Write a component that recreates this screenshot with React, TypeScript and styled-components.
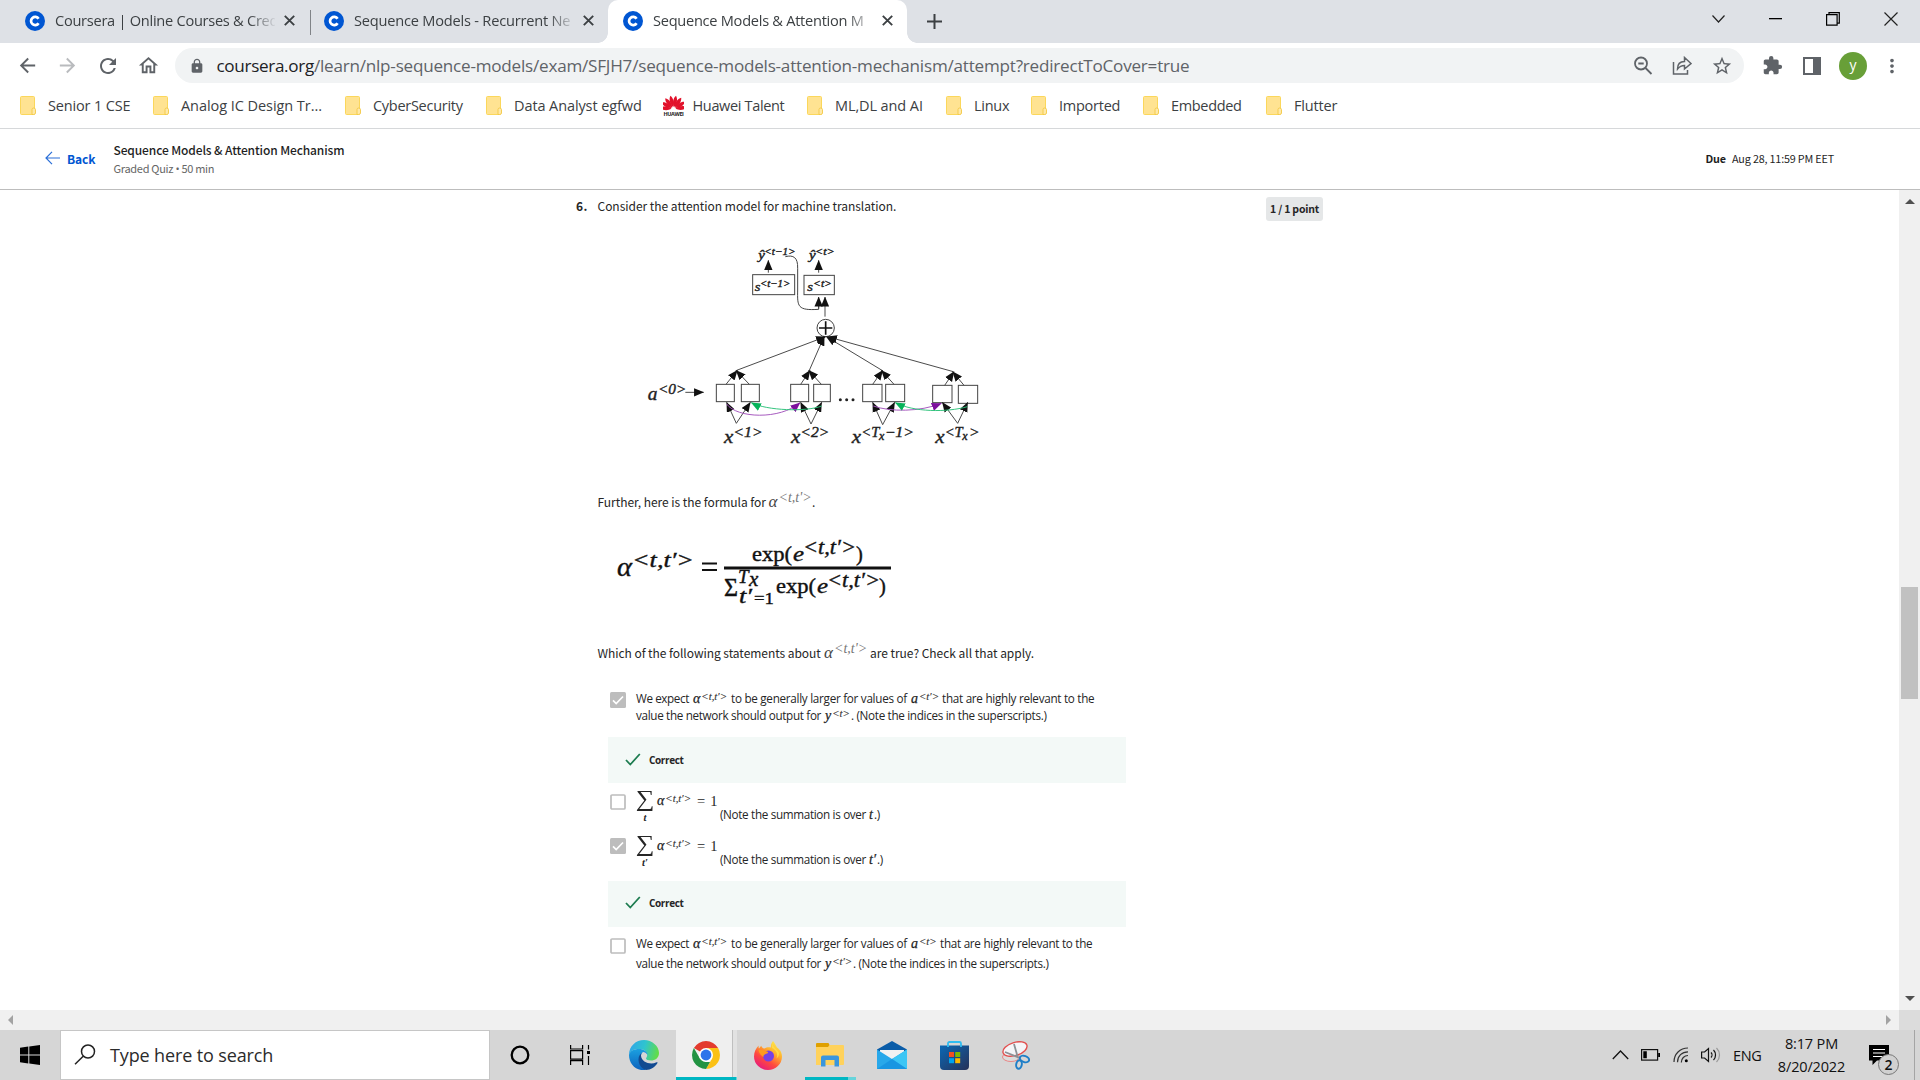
import React from 'react';
import styled, { createGlobalStyle, css } from 'styled-components';
import {
  MdArrowBack, MdArrowForward, MdRefresh, MdOutlineHome, MdLock, MdStarOutline, MdExtension, MdMoreVert,
} from 'react-icons/md';

const UI = '"Open Sans", "Noto Sans", sans-serif';
const SOURCE = '"Noto Sans CJK SC", "Open Sans", sans-serif';
const MATH = '"Liberation Serif", "Times New Roman", serif';

const GlobalStyle = createGlobalStyle`
  * { box-sizing: border-box; }
  html, body { margin: 0; padding: 0; background: #fff; overflow: hidden; }
  svg { display: block; flex: none; }
`;

const Screen = styled.div`
  width: 1920px;
  height: 1080px;
  display: flex;
  flex-direction: column;
  font-family: ${UI};
  background: #fff;
  overflow: hidden;
`;

/* ---------- Tab strip ---------- */

const TabStrip = styled.div`
  height: 43px;
  flex: none;
  display: flex;
  background: #dee1e6;
`;

const Tab = styled.div<{ $width: number; $pad: number; $active?: boolean; $divided?: boolean }>`
  position: relative;
  width: ${p => p.$width}px;
  padding: 0 0 2px ${p => p.$pad}px;
  display: flex;
  align-items: center;
  ${p => p.$divided && css`
    &::after {
      content: '';
      position: absolute;
      right: -1px;
      top: 10px;
      width: 1px;
      height: 25px;
      background: #808387;
    }
  `}
  ${p => p.$active && css`
    background: #fff;
    border-radius: 10px 10px 0 0;
    &::before, &::after {
      content: '';
      position: absolute;
      bottom: 0;
      width: 10px;
      height: 10px;
    }
    &::before { left: -10px; background: radial-gradient(circle at 0 0, transparent 9.5px, #fff 10px); }
    &::after { right: -10px; background: radial-gradient(circle at 100% 0, transparent 9.5px, #fff 10px); }
  `}
`;

const TabTitle = styled.div<{ $ls: number }>`
  width: 220px;
  margin: 0 8px 0 10px;
  padding-bottom: 2px;
  font-size: 14.6px;
  letter-spacing: ${p => p.$ls}px;
  color: #3c4043;
  white-space: nowrap;
  mask-image: linear-gradient(90deg, #000 194px, transparent 222px);
`;

const NewTab = styled.div`
  display: flex;
  align-items: center;
  margin-left: 20px;
`;

const WindowControls = styled.div`
  margin-left: auto;
  margin-right: 22px;
  display: flex;
  align-items: center;
  gap: 44px;
  padding-bottom: 6px;
`;

/* ---------- Address bar ---------- */

const Toolbar = styled.div`
  height: 44px;
  flex: none;
  display: flex;
  align-items: center;
  padding: 1px 17px 0 16px;
  color: #5f6368;
`;

const NavButtons = styled.div`
  display: flex;
  gap: 17.500px;
  width: 159px;
  svg:last-child { margin-left: -1px; }
`;

const Forward = styled.span`
  color: #b9bbbe;
  svg { margin-left: 0; }
`;

const Omnibox = styled.div`
  width: 1569px;
  height: 35px;
  border-radius: 18px;
  background: #f1f3f4;
  display: flex;
  align-items: center;
  padding: 0 11px 0 14px;
`;

const Url = styled.div`
  margin-left: 11.500px;
  flex: 1;
  font-size: 17.1px;
  letter-spacing: -0.22px;
  white-space: nowrap;
  b { font-weight: 400; color: #202124; letter-spacing: -0.32px; }
`;

const OmniIcons = styled.div`
  display: flex;
  align-items: center;
  gap: 19px;
`;

const Extensions = styled.div`
  display: flex;
  align-items: center;
  margin-left: auto;
`;

const PanelIcon = styled.div`
  width: 18px;
  height: 18px;
  border: 2.5px solid #5f6368;
  border-right-width: 8px;
  margin: 0 18px 0 20px;
`;

const Avatar = styled.div`
  width: 28px;
  height: 28px;
  border-radius: 50%;
  background: #689f38;
  color: #fff;
  font-size: 14px;
  display: flex;
  align-items: center;
  justify-content: center;
  padding-bottom: 3px;
  margin-right: 14px;
`;

/* ---------- Bookmarks ---------- */

const BookmarkBar = styled.div`
  height: 42px;
  flex: none;
  display: flex;
  align-items: center;
  padding: 0 0 4px 20px;
  border-bottom: 1px solid #d6d8da;
`;

const Bookmark = styled.div<{ $width: number; $ls: number; $gap?: number }>`
  width: ${p => p.$width}px;
  flex: none;
  display: flex;
  align-items: center;
  gap: ${p => p.$gap ?? 12}px;
  font-size: 14.5px;
  letter-spacing: ${p => p.$ls}px;
  color: #3c4043;
  white-space: nowrap;
`;

/* ---------- Quiz header ---------- */

const QuizHeader = styled.header`
  height: 61px;
  flex: none;
  display: flex;
  align-items: center;
  padding: 0 86px 0 44.500px;
  border-bottom: 1px solid #bdbdbd;
  font-family: ${SOURCE};
  color: #1f1f1f;
  white-space: nowrap;
`;

const BackLink = styled.a`
  display: flex;
  align-items: center;
  gap: 6.500px;
  width: 69px;
  padding-bottom: 2px;
  color: #0056d2;
  font-size: 12px;
  font-weight: 700;
  letter-spacing: -0.1px;
`;

const QuizTitle = styled.div`
  font-size: 12px;
  font-weight: 500;
  line-height: 18px;
  letter-spacing: -0.12px;
`;

const QuizMeta = styled.div`
  font-size: 11px;
  line-height: 18px;
  letter-spacing: -0.3px;
  color: #666;
  span { font-family: ${UI}; }
`;

const DueDate = styled.div`
  margin-left: auto;
  width: 128.500px;
  padding-bottom: 2px;
  display: flex;
  justify-content: space-between;
  font-size: 10.8px;
  letter-spacing: -0.18px;
  b { font-weight: 700; }
`;

/* ---------- Quiz body ---------- */

const Viewport = styled.div`
  height: 820px;
  flex: none;
  display: flex;
`;

const Content = styled.main`
  flex: 1;
  padding-left: 576px;
  color: #262626;
  white-space: nowrap;
`;

const QuestionRow = styled.div`
  display: flex;
  height: 40px;
  padding-top: 7px;
  font-family: ${SOURCE};
  font-size: 12px;
  line-height: 18px;
`;

const QuestionNumber = styled.b`
  width: 21.500px;
  letter-spacing: 0.5px;
`;

const QuestionText = styled.div`
  width: 668.500px;
  letter-spacing: -0.03px;
`;

const PointBadge = styled.div`
  width: 57px;
  height: 24px;
  border-radius: 3px;
  background: #e5e7e8;
  font-size: 10.5px;
  font-weight: 700;
  letter-spacing: -0.2px;
  line-height: 24px;
  text-align: center;
`;

const Figure = styled.div<{ $left: number; $height: number; $below: number }>`
  height: ${p => p.$height}px;
  margin: 0 0 ${p => p.$below}px ${p => p.$left}px;
`;

const Prompt = styled.div<{ $below: number }>`
  display: flex;
  height: 28px;
  margin: 0 0 ${p => p.$below}px 21.500px;
  font-family: ${SOURCE};
  font-size: 12px;
  line-height: 28px;
`;

const Run = styled.span<{ $width?: number; $ls?: number }>`
  flex: none;
  ${p => p.$width !== undefined && css`width: ${p.$width}px;`}
  letter-spacing: ${p => p.$ls ?? -0.28}px;
`;

const MathBox = styled.span<{ $width: number; $light?: boolean; $gap?: number }>`
  flex: none;
  display: flex;
  width: ${p => p.$width}px;
  font-family: ${MATH};
  font-style: italic;
  font-size: ${p => (p.$light ? 17 : 14)}px;
  letter-spacing: 0;
  color: ${p => (p.$light ? '#444' : '#1f1f1f')};
  -webkit-text-stroke: ${p => (p.$light ? 0 : 0.25)}px currentColor;
  sup {
    margin-left: ${p => p.$gap ?? 1}px;
    font-size: ${p => (p.$light ? 14 : 10.8)}px;
    line-height: 1;
    padding-top: ${p => (p.$light ? 3 : 1)}px;
    vertical-align: baseline;
    -webkit-text-stroke: ${p => (p.$light ? 0 : 0.15)}px currentColor;
    color: ${p => (p.$light ? '#777' : '#333')};
  }
`;

const Option = styled.div<{ $height: number; $boxTop: number }>`
  display: flex;
  height: ${p => p.$height}px;
  padding-left: 34px;
  svg { margin-top: ${p => p.$boxTop}px; }
`;

const OptionText = styled.div<{ $top: number }>`
  margin: ${p => p.$top}px 0 0 10px;
  font-size: 11.7px;
`;

const Line = styled.div<{ $height?: number }>`
  display: flex;
  height: ${p => p.$height ?? 17}px;
  line-height: 17px;
`;

const Feedback = styled.div<{ $height: number; $below: number; $lift?: number }>`
  width: 518px;
  height: ${p => p.$height}px;
  margin: 0 0 ${p => p.$below}px 32px;
  padding: 0 0 ${p => p.$lift ?? 0}px 17px;
  display: flex;
  align-items: center;
  gap: 8px;
  background: #f3f9f7;
  font-size: 10px;
  font-weight: 700;
  letter-spacing: -0.38px;
  svg { margin-bottom: 2px; }
`;

const SumEquation = styled.div`
  display: flex;
  align-items: flex-start;
  margin: 2px 0 0 10px;
  font-family: ${MATH};
  line-height: 18px;
`;

const SumSign = styled.div`
  width: 21px;
  margin-top: -3px;
  display: flex;
  flex-direction: column;
  align-items: center;
  padding-right: 3px;
  i { margin-top: 4px; font-size: 10.5px; line-height: 9px; font-weight: 700; }
`;

const Sigma = styled.span`
  font-size: 23px;
  line-height: 20px;
  transform: scaleX(1.14);
`;

const SumNote = styled.div`
  display: flex;
  padding-top: 16px;
  font-size: 11.7px;
  line-height: 17px;
`;

const Equals = styled.span`
  width: 23px;
  padding-top: 1px;
  font-size: 14.5px;
  line-height: 17px;
  word-spacing: 1.5px;
`;

/* ---------- Scrollbars ---------- */

const VScroll = styled.div`
  width: 21px;
  background: #f0f0f0;
  display: flex;
  flex-direction: column;
  align-items: center;
  padding: 9px 0 9px;
`;

const Thumb = styled.div`
  width: 17px;
  height: 112px;
  margin: 383px 0 auto;
  background: #c1c1c1;
`;

const Caret = styled.div<{ $dir: 'up' | 'down' | 'left' | 'right' }>`
  width: 0;
  height: 0;
  flex: none;
  border: 5px solid transparent;
  ${p => p.$dir === 'up' && css`border-bottom-color: #505050; border-top: 0;`}
  ${p => p.$dir === 'down' && css`border-top-color: #505050; border-bottom: 0;`}
  ${p => p.$dir === 'left' && css`border-right-color: #a3a3a3; border-left: 0;`}
  ${p => p.$dir === 'right' && css`border-left-color: #a3a3a3; border-right: 0;`}
`;

const HScroll = styled.div`
  height: 20px;
  flex: none;
  display: flex;
  align-items: center;
  justify-content: space-between;
  background: linear-gradient(90deg, #f0f0f0 1899px, #dcdcdc 1899px);
  padding: 0 29px 0 8px;
`;

/* ---------- Taskbar ---------- */

const Taskbar = styled.footer`
  height: 50px;
  flex: none;
  display: flex;
  background: #d6d6d6;
`;

const Start = styled.div`
  width: 60px;
  display: flex;
  align-items: center;
  justify-content: center;
`;

const SearchBox = styled.div`
  width: 430px;
  border: 1px solid #c6c6c6;
  background: #fff;
  display: flex;
  align-items: center;
  padding: 0 0 1px 13px;
  gap: 14px;
  font-size: 18px;
  letter-spacing: -0.13px;
  color: #2b2b2b;
`;

const TaskItem = styled.div<{ $width: number; $left?: number }>`
  width: ${p => p.$width}px;
  display: flex;
  align-items: center;
  justify-content: center;
  padding-left: ${p => p.$left ?? 0}px;
`;

const ChromeTask = styled.div`
  width: 61px;
  display: flex;
  align-items: center;
  padding-left: 16px;
  background: linear-gradient(90deg, #efefef 56px, #bfbfbf 56px, #bfbfbf 57px, #e2e2e2 57px);
  border-style: solid;
  border-image: linear-gradient(90deg, #00b7c3 57px, #66d4db 57px) 3;
  border-width: 0 0 3px 0;
  svg { margin-top: 2px; }
`;

const ExplorerTask = styled.div`
  width: 51px;
  margin: 0 20px 0 24px;
  display: flex;
  align-items: center;
  padding: 0 0 0 11px;
  border-style: solid;
  border-image: linear-gradient(90deg, #00b7c3 41px, #66d4db 41px) 3;
  border-width: 0 0 3px 0;
  svg { margin-top: 2px; }
`;

const Tray = styled.div`
  margin-left: auto;
  display: flex;
  align-items: center;
  font-size: 14.5px;
  color: #111;
`;

const TrayIcons = styled.div`
  display: flex;
  align-items: center;
  gap: 12.500px;
`;

const Lang = styled.div`
  margin-left: 12px;
  width: 44px;
  letter-spacing: -0.4px;
`;

const Clock = styled.div`
  width: 69px;
  text-align: center;
  line-height: 23px;
  letter-spacing: -0.15px;
  white-space: nowrap;
`;

const Notifications = styled.div`
  position: relative;
  width: 20px;
  margin: 0 25px 0 23px;
`;

const Count = styled.div`
  position: absolute;
  left: 9px;
  top: 9px;
  width: 21px;
  height: 21px;
  border: 1px solid #777;
  border-radius: 50%;
  background: #d0d0d0;
  font-size: 14px;
  font-weight: 600;
  line-height: 19px;
  text-align: center;
`;

const ShowDesktop = styled.div`
  width: 6px;
  height: 50px;
  border-left: 1px solid #a5a5a5;
`;

/* ---------- Icons ---------- */

const CourseraIcon = () => (
  <svg width="20" height="20" viewBox="0 0 20 20">
    <circle cx="10" cy="10" r="10" fill="#0056d2" />
    <path d="M13.6 12.2A4.1 4.1 0 1 1 13.6 7.8" fill="none" stroke="#fff" strokeWidth="2.7" />
  </svg>
);

const CloseIcon = () => (
  <svg width="13" height="13" viewBox="0 0 13 13" stroke="#3c4043" strokeWidth="1.9">
    <path d="M1.8 1.8l9.4 9.4M11.2 1.8l-9.4 9.4" />
  </svg>
);

const FolderIcon = () => (
  <svg width="16" height="19" viewBox="0 0 16 19">
    <rect x=".5" y=".5" width="14" height="18" rx="1" fill="#ffe392" stroke="#fbd75b" />
    <path d="M12 18.500V13.500q0-1.500 1.700-1.500t1.800 1.500v3.500q0 1.500-2 1.500z" fill="#ffe9a8" stroke="#f3c845" strokeWidth=".9" />
  </svg>
);

const HuaweiIcon = () => (
  <svg width="21" height="21" viewBox="0 0 21 21">
    <g fill="#e2122b">
      {[-84, -60, -36, -12, 12, 36, 60, 84].map(a => (
        <path key={a} d="M10.500 14C8 10.500 7.700 5.500 10.200 2.400C12.900 5.500 12.700 10.500 10.500 14Z" transform={`rotate(${a} 10.5 14) translate(0 -2)`} />
      ))}
    </g>
    <text x=".5" y="20.800" fontFamily={UI} fontWeight="700" fontSize="4.800" textLength="20" lengthAdjust="spacingAndGlyphs" fill="#222">HUAWEI</text>
  </svg>
);

const CheckedBox = () => (
  <svg width="16" height="16" viewBox="0 0 16 16">
    <rect width="16" height="16" rx="1.500" fill="#bdbdbd" />
    <path d="M3 8.300l3.200 3.300L13 4.500" fill="none" stroke="#fff" strokeWidth="1.700" />
  </svg>
);

const EmptyBox = () => (
  <svg width="16" height="16" viewBox="0 0 16 16">
    <rect x="1" y="1" width="14" height="14" rx="1" fill="#fff" stroke="#bdbdbd" strokeWidth="1.700" />
  </svg>
);

const GreenCheck = () => (
  <svg width="16" height="13" viewBox="0 0 16 13">
    <path d="M1 7l4.300 4.500L14.800 1" fill="none" stroke="#1d7c50" strokeWidth="1.800" />
  </svg>
);

const EdgeIcon = () => (
  <svg width="30" height="30" viewBox="0 0 30 30">
    <defs>
      <linearGradient id="edgeTop" x1="0" y1=".3" x2="1" y2=".5">
        <stop offset="0" stopColor="#2fa6e8" /><stop offset=".5" stopColor="#2fc4cf" /><stop offset="1" stopColor="#63dd45" />
      </linearGradient>
      <linearGradient id="edgeLeft" x1="0" y1="0" x2="0" y2="1">
        <stop offset="0" stopColor="#1ba0e0" /><stop offset="1" stopColor="#0c62bd" />
      </linearGradient>
    </defs>
    <path d="M0 15C0 6 7 0 15 0s15 6 15 13c0 5-4 7.500-8 7.500-3 0-5-1-5-2 0-.800 1.200-1.500 1.200-3.500C18.200 11 14 9 10 9 5 9 1 11 0 15z" fill="url(#edgeTop)" />
    <path d="M0 15C.500 11 5 9 10 9c4.500 0 8.500 2.500 8.500 6-1-2-3-3-4.500-3-4 3-5 13 3 18C7 31.500 0 24 0 15z" fill="url(#edgeLeft)" />
    <path d="M12 13.500C7.500 17 9 28 17 30c5 0 9-3 11.500-7 .300-.700-.300-1-1-.700-6 3-15 0-15.500-6.500 0-1 .200-1.800.700-2.300z" fill="#114a91" />
  </svg>
);

const ChromeIcon = () => (
  <svg width="28" height="28" viewBox="0 0 28 28">
    <path d="M14 14L1.880 7A14 14 0 0 1 26.120 7L14 7z" fill="#e33b2e" />
    <path d="M14 7H26.120A14 14 0 0 1 14 28L20.060 17.500z" fill="#fbc116" />
    <path d="M1.880 7L7.940 17.500L14 21h4L14 28A14 14 0 0 1 1.880 7z" fill="#229342" />
    <circle cx="14" cy="14" r="7" fill="#fff" />
    <circle cx="14" cy="14" r="5.400" fill="#2f74ea" />
  </svg>
);

const FirefoxIcon = () => (
  <svg width="28" height="29" viewBox="0 0 28 29">
    <defs>
      <linearGradient id="fox" x1=".85" y1="0" x2=".2" y2="1">
        <stop offset="0" stopColor="#fff44f" /><stop offset=".35" stopColor="#ffb02e" />
        <stop offset=".65" stopColor="#ff4a3d" /><stop offset="1" stopColor="#e31587" />
      </linearGradient>
    </defs>
    <path d="M27 11c-1-2-2.500-3.500-4-4.500-1-2-2.500-4.500-4-6.500-1.500 2-2.500 4-2 6.500-2.500-.500-5 0-6.500 1-1.500-.200-3-1.500-3.300-2.800L5 7.500c-.500-1-.500-2-.300-3C2 7 0 11 0 15.500A14 13.500 0 0 0 28 15.500C28 14 27.600 12.500 27 11z" fill="url(#fox)" />
    <circle cx="14.500" cy="15" r="5.500" fill="#7542e5" />
    <path d="M4.500 9c3-1 5 .500 8.500 1.500 1.500.500 1.500 1.500 0 2-2.500 1-4 1.500-3.500 3.800-2.500-2-4.500-4-5-7.300z" fill="#ff9a1f" />
    <path d="M18 7c4 2 6.500 6 4.500 10.500 1.500-1 2.500-3 2.500-5C24 8.500 19 7 18 2z" fill="#ffe14a" opacity=".8" />
  </svg>
);

const ExplorerIcon = () => (
  <svg width="28" height="24" viewBox="0 0 28 24">
    <path d="M0 1q0-1 1-1h11q1 0 1 1l1 2v3H0z" fill="#dfa000" />
    <path d="M0 4h12l1.500-2H27q1 0 1 1v18q0 1-1 1H0z" fill="#ffd25c" />
    <path d="M5 23.500v-9q0-2 2-2h14q2 0 2 2v9h-4.500V17h-9v6.500z" fill="#3a96dd" />
  </svg>
);

const MailIcon = () => (
  <svg width="30" height="28" viewBox="0 0 30 28">
    <path d="M0 8.500L15 0l15 8.500v2H0z" fill="#0a5ca8" />
    <path d="M3 9h24v10H3z" fill="#f2f2f2" />
    <path d="M0 8.500L15 18 30 8.500V28H0z" fill="#28a8ea" />
    <path d="M30 8.500V28L15 18z" fill="#3cc6f5" />
    <path d="M0 28h30L15 18z" fill="#1490df" opacity=".75" />
  </svg>
);

const StoreIcon = () => (
  <svg width="29" height="29" viewBox="0 0 29 29">
    <defs>
      <linearGradient id="store" x1="0" y1="0" x2="1" y2="1">
        <stop offset="0" stopColor="#0a68b5" /><stop offset="1" stopColor="#273158" />
      </linearGradient>
    </defs>
    <path d="M0 4.500h29V25q0 4-4 4H4q-4 0-4-4z" fill="url(#store)" />
    <path d="M8 6V2.500Q8 1 9.500 1h10Q21 1 21 2.500V6" fill="none" stroke="#2fbcf0" strokeWidth="1.800" />
    <path d="M9 11h5v5H9z" fill="#f25022" /><path d="M15.200 11h5v5h-5z" fill="#7fba00" />
    <path d="M9 17.200h5v5H9z" fill="#00a4ef" /><path d="M15.200 17.200h5v5h-5z" fill="#ffb900" />
  </svg>
);

const SnipIcon = () => (
  <svg width="28" height="29" viewBox="0 0 28 29" fill="none">
    <ellipse cx="9" cy="16" rx="8.500" ry="4.500" stroke="#e98585" fill="#dcdcdc" />
    <ellipse cx="13" cy="8" rx="12.500" ry="6.500" transform="rotate(-18 13 8)" fill="#f5f5f8" stroke="#e2504f" strokeWidth="1.400" />
    <path d="M3 11l15 6M12 3l4 14" stroke="#8c9196" strokeWidth="1.800" />
    <ellipse cx="22.500" cy="18" rx="4.800" ry="3" transform="rotate(20 22.500 18)" stroke="#1f7fc8" strokeWidth="1.900" />
    <ellipse cx="17" cy="23.500" rx="2.800" ry="4.300" transform="rotate(10 17 23.500)" stroke="#1f7fc8" strokeWidth="1.900" />
  </svg>
);

/* ---------- Figures ---------- */

const Arrow = ({ d, color = '#111', line = '#444' }: { d: string; color?: string; line?: string }) => (
  <path d={d} fill="none" stroke={line} strokeWidth="2.900" markerEnd={`url(#head-${color.slice(1)})`} />
);

type LabelProps = { x: number; y: number; base: string; sup: string; size: number; baseLen: number; supX: number; supY: number; supSize: number; len: number };
const Label = ({ x, y, base, sup, size, baseLen, supX, supY, supSize, len }: LabelProps) => (
  <g fontFamily={MATH} fontStyle="italic" fill="#222" stroke="#222" strokeWidth="1.200">
    <text x={x} y={y} fontSize={size} textLength={baseLen} lengthAdjust="spacingAndGlyphs">{base}</text>
    <text x={supX} y={supY} fontSize={supSize} textLength={len} lengthAdjust="spacingAndGlyphs">{sup}</text>
  </g>
);

const AttentionDiagram = () => (
  <svg width="460" height="230" viewBox="0 120 1380 690">
    <defs>
      {['#111', '#7d0f9c', '#07b35a'].map(c => (
        <marker key={c} id={`head-${c.slice(1)}`} viewBox="0 0 24 20" refX="23" refY="10" markerWidth="30" markerHeight="26" markerUnits="userSpaceOnUse" orient="auto">
          <path d="M0 0L24 10L0 20Z" fill={c} />
        </marker>
      ))}
    </defs>
    <Label x={595} y={206} base="ŷ" sup="<t−1>" size={38} baseLen={20} supX={613} supY={194} supSize={31} len={94} />
    <Label x={747} y={206} base="ŷ" sup="<t>" size={38} baseLen={20} supX={765} supY={194} supSize={31} len={59} />
    <g fill="none" stroke="#444" strokeWidth="3">
      <rect x="578" y="254" width="126" height="60" />
      <rect x="732" y="256" width="91" height="58" />
      {[[469, 583, 54, 52], [544, 583, 54, 52], [692, 583, 54, 52], [761, 583, 50, 52], [908, 583, 58, 52], [977, 583, 57, 52], [1118, 586, 58, 52], [1195, 586, 58, 54]].map(([x, y, w, h]) => (
        <rect key={x} x={x} y={y} width={w} height={h} />
      ))}
      <circle cx="797" cy="414" r="26" />
      <path d="M676 200C700 194 714 202 713 235V300C712 350 712 362 776 358V340" />
    </g>
    <path d="M797 394v40M777 414h40" stroke="#111" strokeWidth="5" />
    <Label x={584} y={303} base="s" sup="<t−1>" size={40} baseLen={17} supX={600} supY={292} supSize={31} len={91} />
    <Label x={742} y={303} base="s" sup="<t>" size={40} baseLen={17} supX={759} supY={292} supSize={31} len={57} />
    <Arrow d="M625 248V211" /><Arrow d="M776 248V211" />
    <Arrow d="M776 356V321" /><Arrow d="M795 380V321" />
    <Arrow d="M530 541L797 440" /><Arrow d="M748 541L793 438" />
    <Arrow d="M966 541L799 440" /><Arrow d="M1180 545L802 440" />
    {[[530, 498, 568, 541, 583], [748, 722, 784, 541, 583], [966, 938, 1002, 541, 583], [1180, 1154, 1212, 545, 586]].map(([x, l, r, y, b]) => (
      <g key={x}><Arrow d={`M${l} ${b}L${x + 2} ${y}`} /><Arrow d={`M${r} ${b}L${x - 2} ${y}`} /></g>
    ))}
    {[[529, 500, 571, 700], [753, 722, 785, 702], [968, 938, 1004, 704], [1193, 1147, 1223, 700]].map(([x, l, r, y]) => (
      <g key={x}><Arrow d={`M${x} ${y}L${l} 637`} /><Arrow d={`M${x} ${y}L${r} 637`} /></g>
    ))}
    <Arrow d="M500 642C530 685 660 690 720 638" color="#7d0f9c" line="#a455bd" />
    <Arrow d="M785 648C740 666 620 662 574 638" color="#07b35a" line="#2ec27a" />
    <Arrow d="M940 648C990 666 1080 666 1144 640" color="#7d0f9c" line="#a455bd" />
    <Arrow d="M1222 650C1160 668 1060 666 1006 638" color="#07b35a" line="#2ec27a" />
    <Label x={263} y={629} base="a" sup="<0>" size={56} baseLen={29} supX={294} supY={611} supSize={44} len={85} />
    <Arrow d="M376 607H431" />
    <g fill="#222"><circle cx="841" cy="629" r="4.500" /><circle cx="860" cy="629" r="4.500" /><circle cx="879" cy="629" r="4.500" /></g>
    <Label x={492} y={760} base="x" sup="<1>" size={58} baseLen={28} supX={520} supY={741} supSize={44} len={88} />
    <Label x={693} y={760} base="x" sup="<2>" size={58} baseLen={28} supX={721} supY={741} supSize={44} len={87} />
    <g fontFamily={MATH} fontStyle="italic" fill="#222" stroke="#222" strokeWidth="1.200">
      <text x="875" y="760" fontSize="58" textLength="28" lengthAdjust="spacingAndGlyphs">x</text>
      <text x="904" y="741" fontSize="44" textLength="54" lengthAdjust="spacingAndGlyphs">{'<T'}</text><text x="957" y="749" fontSize="36">x</text>
      <text x="974" y="741" fontSize="44" textLength="88" lengthAdjust="spacingAndGlyphs">{'−1>'}</text>
      <text x="1126" y="760" fontSize="58" textLength="28" lengthAdjust="spacingAndGlyphs">x</text>
      <text x="1154" y="741" fontSize="44" textLength="54" lengthAdjust="spacingAndGlyphs">{'<T'}</text><text x="1207" y="749" fontSize="36">x</text>
      <text x="1227" y="741" fontSize="44" textLength="32" lengthAdjust="spacingAndGlyphs">{'>'}</text>
    </g>
  </svg>
);

const AlphaFormula = () => (
  <svg width="300" height="90" viewBox="600 530 300 90" fontFamily={MATH} fill="#111" stroke="#111" strokeWidth=".4">
    <g fontStyle="italic">
      <text x="617" y="576" fontSize="28" textLength="15" lengthAdjust="spacingAndGlyphs">α</text>
      <text x="632" y="567" fontSize="22" textLength="62" lengthAdjust="spacingAndGlyphs">{"<t,t′>"}</text>
      <text x="803" y="554" fontSize="21" textLength="53" lengthAdjust="spacingAndGlyphs">{"<t,t′>"}</text>
      <text x="827" y="587" fontSize="21" textLength="53" lengthAdjust="spacingAndGlyphs">{"<t,t′>"}</text>
      <text x="793" y="561" fontSize="22" textLength="11" lengthAdjust="spacingAndGlyphs">e</text>
      <text x="817" y="593" fontSize="22" textLength="11" lengthAdjust="spacingAndGlyphs">e</text>
      <text x="738" y="583" fontSize="19">T</text>
      <text x="749" y="586" fontSize="21">x</text>
      <text x="739" y="603" fontSize="20" textLength="13" lengthAdjust="spacingAndGlyphs">t′</text>
    </g>
    <path d="M702 563.500h15M702 570h15" strokeWidth="1.800" />
    <path d="M724 568h167" strokeWidth="3" />
    <text x="752" y="561" fontSize="20.500" textLength="40" lengthAdjust="spacingAndGlyphs">exp(</text>
    <text x="856" y="561" fontSize="20.500">)</text>
    <text x="724" y="596" fontSize="25" textLength="14" lengthAdjust="spacingAndGlyphs">Σ</text>
    <text x="754" y="604" fontSize="17" textLength="20" lengthAdjust="spacingAndGlyphs">=1</text>
    <text x="776" y="593" fontSize="20.500" textLength="40" lengthAdjust="spacingAndGlyphs">exp(</text>
    <text x="879" y="593" fontSize="20.500">)</text>
  </svg>
);

const bookmarks: [string, number, number][] = [
  ['Senior 1 CSE', 133, -0.15], ['Analog IC Design Tr...', 192, -0.06], ['CyberSecurity', 141, -0.28],
  ['Data Analyst egfwd', 177, -0.1], ['Huawei Talent', 144, -0.34], ['ML,DL and AI', 139, -0.1],
  ['Linux', 85, -0.25], ['Imported', 112, -0.25], ['Embedded', 123, -0.33], ['Flutter', 90, -0.15],
];

export default function App() {
  return (
    <>
      <GlobalStyle />
      <Screen>
        <TabStrip>
          <Tab $width={310} $pad={25} $divided>
            <CourseraIcon /><TabTitle $ls={-0.27}>Coursera | Online Courses &amp; Cred</TabTitle><CloseIcon />
          </Tab>
          <Tab $width={298} $pad={14}>
            <CourseraIcon /><TabTitle $ls={-0.21}>Sequence Models - Recurrent Ne</TabTitle><CloseIcon />
          </Tab>
          <Tab $width={299} $pad={15} $active>
            <CourseraIcon /><TabTitle $ls={-0.27}>Sequence Models &amp; Attention M</TabTitle><CloseIcon />
          </Tab>
          <NewTab>
            <svg width="15" height="15" viewBox="0 0 15 15" stroke="#3c4043" strokeWidth="2"><path d="M7.500 0v15M0 7.500h15" /></svg>
          </NewTab>
          <WindowControls>
            <svg width="13" height="8" viewBox="0 0 13 8" fill="none" stroke="#222" strokeWidth="1.200"><path d="M.500 .500l6 6.500 6-6.500" /></svg>
            <svg width="13" height="2" viewBox="0 0 13 2"><path d="M0 0h13v1.300H0z" /></svg>
            <svg width="14" height="14" viewBox="0 0 14 14" fill="none" stroke="#000" strokeWidth="1.200"><path d="M.600 2.600h10.500v10.500H.600zM3 2.500V.600h10.300v10.500H11.300" /></svg>
            <svg width="14" height="14" viewBox="0 0 14 14" stroke="#222" strokeWidth="1.200"><path d="M.500 .500l13 13M13.500 .500l-13 13" /></svg>
          </WindowControls>
        </TabStrip>

        <Toolbar>
          <NavButtons>
            <MdArrowBack size={23} /><Forward><MdArrowForward size={23} /></Forward><MdRefresh size={24} /><MdOutlineHome size={23} />
          </NavButtons>
          <Omnibox>
            <MdLock size={16} />
            <Url><b>coursera.org</b>/learn/nlp-sequence-models/exam/SFJH7/sequence-models-attention-mechanism/attempt?redirectToCover=true</Url>
            <OmniIcons>
              <svg width="19" height="19" viewBox="0 0 19 19" fill="none" stroke="#5f6368" strokeWidth="1.800"><circle cx="7" cy="7.500" r="6" /><path d="M4.300 7.500h5.400M11.500 12l6 6" /></svg>
              <svg width="20" height="19" viewBox="0 0 20 19" fill="none" stroke="#5f6368" strokeWidth="1.500"><path d="M1.500 6v12h14v-4M5.500 13C5.500 8 8.500 5.500 12.500 5.500V1.500L19 7.500 12.500 13V9.500C9.500 9.500 7.500 10.500 5.500 13z" /></svg>
              <MdStarOutline size={22} />
            </OmniIcons>
          </Omnibox>
          <Extensions>
            <MdExtension size={21} />
            <PanelIcon />
            <Avatar>y</Avatar>
            <MdMoreVert size={22} />
          </Extensions>
        </Toolbar>

        <BookmarkBar>
          {bookmarks.map(([name, width, ls]) => (
            <Bookmark key={name} $width={width} $ls={ls} $gap={name === 'Huawei Talent' ? 8.500 : 12}>
              {name === 'Huawei Talent' ? <HuaweiIcon /> : <FolderIcon />}
              {name}
            </Bookmark>
          ))}
        </BookmarkBar>

        <QuizHeader>
          <BackLink>
            <svg width="16" height="14" viewBox="0 0 16 14" fill="none" stroke="#2a6fd8" strokeWidth="1.200"><path d="M15 7H1M7 .800L1 7l6 6.200" /></svg>
            Back
          </BackLink>
          <div>
            <QuizTitle>Sequence Models &amp; Attention Mechanism</QuizTitle>
            <QuizMeta>Graded Quiz <span>•</span> 50 min</QuizMeta>
          </div>
          <DueDate><b>Due</b><span>Aug 28, 11:59 PM EET</span></DueDate>
        </QuizHeader>

        <Viewport>
          <Content>
            <QuestionRow>
              <QuestionNumber>6.</QuestionNumber>
              <QuestionText>Consider the attention model for machine translation.</QuestionText>
              <PointBadge>1 / 1 point</PointBadge>
            </QuestionRow>
            <Figure $left={-16} $height={230} $below={28}><AttentionDiagram /></Figure>
            <Prompt $below={14}>
              <Run $width={171} $ls={-0.05}>Further, here is the formula for</Run>
              <MathBox $width={43.500} $light>α<sup>{"<t,t'>"}</sup></MathBox>
              <Run>.</Run>
            </Prompt>
            <Figure $left={24} $height={90} $below={19}><AlphaFormula /></Figure>
            <Prompt $below={23}>
              <Run $width={226.500} $ls={-0.05}>Which of the following statements about</Run>
              <MathBox $width={46} $light>α<sup>{"<t,t'>"}</sup></MathBox>
              <Run $ls={-0.03}>are true? Check all that apply.</Run>
            </Prompt>

            <Option $height={47} $boxTop={2}>
              <CheckedBox />
              <OptionText $top={0}>
                <Line>
                  <Run $width={57} $ls={-0.4}>We expect</Run>
                  <MathBox $width={38}>α<sup>{"<t,t′>"}</sup></MathBox>
                  <Run $width={180}>to be generally larger for values of</Run>
                  <MathBox $width={31}>a<sup>{"<t′>"}</sup></MathBox>
                  <Run>that are highly relevant to the</Run>
                </Line>
                <Line>
                  <Run $width={189} $ls={-0.33}>value the network should output for</Run>
                  <MathBox $width={26}>y<sup>{"<t>"}</sup></MathBox>
                  <Run $ls={-0.32}>. (Note the indices in the superscripts.)</Run>
                </Line>
              </OptionText>
            </Option>
            <Feedback $height={46} $below={7}><GreenCheck />Correct</Feedback>

            <Option $height={45} $boxTop={4}>
              <EmptyBox />
              <SumEquation>
                <SumSign><Sigma>∑</Sigma><i>t</i></SumSign>
                <MathBox $width={40}>α<sup>{"<t,t′>"}</sup></MathBox>
                <Equals>= 1</Equals>
              </SumEquation>
              <SumNote>
                <Run $width={149} $ls={-0.33}>(Note the summation is over</Run>
                <MathBox $width={5}>t</MathBox>
                <Run>.)</Run>
              </SumNote>
            </Option>
            <Option $height={46} $boxTop={3}>
              <CheckedBox />
              <SumEquation>
                <SumSign><Sigma>∑</Sigma><i>t′</i></SumSign>
                <MathBox $width={40}>α<sup>{"<t,t′>"}</sup></MathBox>
                <Equals>= 1</Equals>
              </SumEquation>
              <SumNote>
                <Run $width={149} $ls={-0.33}>(Note the summation is over</Run>
                <MathBox $width={8}>t′</MathBox>
                <Run>.)</Run>
              </SumNote>
            </Option>
            <Feedback $height={46} $below={9} $lift={2}><GreenCheck />Correct</Feedback>

            <Option $height={50} $boxTop={2}>
              <EmptyBox />
              <OptionText $top={-1}>
                <Line $height={20}>
                  <Run $width={57} $ls={-0.4}>We expect</Run>
                  <MathBox $width={38}>α<sup>{"<t,t′>"}</sup></MathBox>
                  <Run $width={180}>to be generally larger for values of</Run>
                  <MathBox $width={29}>a<sup>{"<t>"}</sup></MathBox>
                  <Run>that are highly relevant to the</Run>
                </Line>
                <Line>
                  <Run $width={189} $ls={-0.33}>value the network should output for</Run>
                  <MathBox $width={28}>y<sup>{"<t′>"}</sup></MathBox>
                  <Run $ls={-0.32}>. (Note the indices in the superscripts.)</Run>
                </Line>
              </OptionText>
            </Option>
          </Content>
          <VScroll>
            <Caret $dir="up" /><Thumb /><Caret $dir="down" />
          </VScroll>
        </Viewport>
        <HScroll><Caret $dir="left" /><Caret $dir="right" /></HScroll>

        <Taskbar>
          <Start>
            <svg width="20" height="20" viewBox="0 0 20 20"><path d="M0 2.800L8.300 1.600V9.500H0zM9.300 1.500L20 0v9.500H9.300zM0 10.500h8.300v7.900L0 17.200zM9.300 10.500H20V20L9.300 18.500z" /></svg>
          </Start>
          <SearchBox>
            <svg width="22" height="21" viewBox="0 0 22 21" fill="none" stroke="#222" strokeWidth="1.500"><circle cx="14" cy="7.500" r="6.500" /><path d="M9.200 12.200L1 20.300" /></svg>
            Type here to search
          </SearchBox>
          <TaskItem $width={60}>
            <svg width="20" height="20" viewBox="0 0 20 20"><circle cx="10" cy="10" r="8.300" fill="none" stroke="#000" strokeWidth="2.300" /></svg>
          </TaskItem>
          <TaskItem $width={60}>
            <svg width="20" height="20" viewBox="0 0 20 20" fill="none" stroke="#000" strokeWidth="1.200"><path d="M.600 0v4h12V0M.600 5.600h12v8.500H.600zM.600 20v-4.300h12V20M18.500 0v4.500M18.500 11v9" /><path d="M17 6h3v3h-3z" fill="#000" stroke="none" /></svg>
          </TaskItem>
          <TaskItem $width={66} $left={2}><EdgeIcon /></TaskItem>
          <ChromeTask><ChromeIcon /></ChromeTask>
          <TaskItem $width={44} $left={17}><FirefoxIcon /></TaskItem>
          <ExplorerTask><ExplorerIcon /></ExplorerTask>
          <TaskItem $width={32}><MailIcon /></TaskItem>
          <TaskItem $width={92}><StoreIcon /></TaskItem>
          <TaskItem $width={32}><SnipIcon /></TaskItem>
          <Tray>
            <TrayIcons>
              <svg width="17" height="10" viewBox="0 0 17 10" fill="none" stroke="#111" strokeWidth="1.300"><path d="M.800 9l7.700-8 7.700 8" /></svg>
              <svg width="19" height="12" viewBox="0 0 19 12"><rect x=".600" y=".600" width="16" height="10.500" fill="none" stroke="#111" strokeWidth="1.200" /><path d="M2.300 2.300h3.500v7H2.300zM17.200 4H19v4h-1.800z" /></svg>
              <svg width="16" height="16" viewBox="0 0 16 16" fill="none" stroke="#333" strokeWidth="1.200"><path d="M1 15C1 7 7 1 15 1M4.500 15.300C4.500 9 9 4.800 15 4.800M8.300 15.500c0-4 3-7 6.700-7" /><circle cx="13.300" cy="13.700" r="1.500" fill="#000" stroke="none" /></svg>
              <svg width="20" height="16" viewBox="0 0 20 16" fill="none" stroke="#111" strokeWidth="1.200"><path d="M.600 5v6h3L7.500 14.500v-13L3.600 5zM10 5.500c1.300 1.300 1.300 3.700 0 5M12.500 3c2.700 2.700 2.700 7.300 0 10" /><path d="M15.500 1c4 4 4 10 0 14" stroke="#999" /></svg>
            </TrayIcons>
            <Lang>ENG</Lang>
            <Clock>8:17 PM<br />8/20/2022</Clock>
            <Notifications>
              <svg width="20" height="20" viewBox="0 0 20 20"><path d="M0 0h20v15.500H8L3.500 20v-4.500H0z" /><path d="M4 4.500h12M4 8h12M4 11.500h12" stroke="#fff" strokeWidth="1.200" /></svg>
              <Count>2</Count>
            </Notifications>
            <ShowDesktop />
          </Tray>
        </Taskbar>
      </Screen>
    </>
  );
}
